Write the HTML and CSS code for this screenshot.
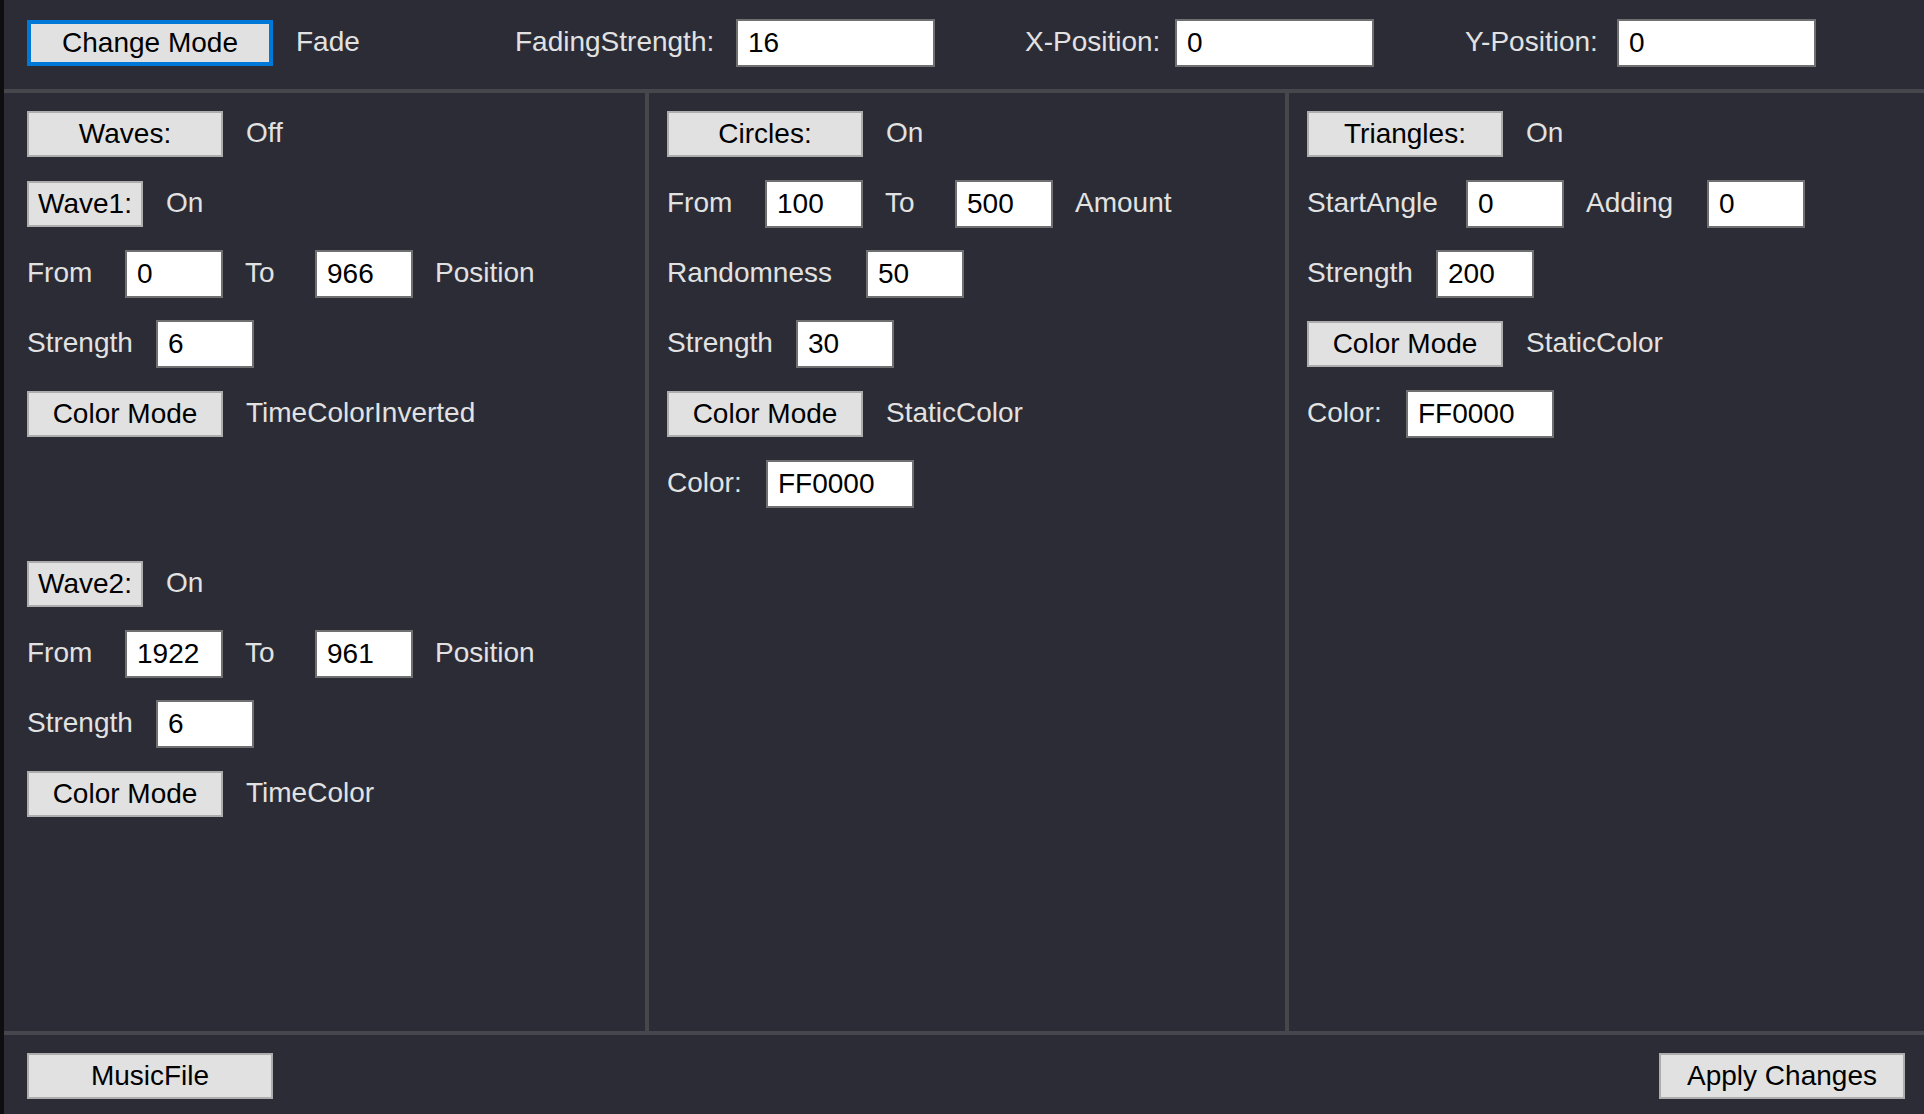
FILE: index.html
```html
<!DOCTYPE html>
<html lang="en">
<head>
<meta charset="utf-8">
<title>Visualizer Settings</title>
<link rel="stylesheet" href="styles.css">
</head>
<body>
<div class="app">
  <header class="topbar">
    <button class="btn btn-wide btn-focus">Change Mode</button>
    <span class="txt mode-val">Fade</span>
    <label class="txt lbl-fading">FadingStrength:</label>
    <input class="field field-hdr" value="16">
    <label class="txt lbl-xpos">X-Position:</label>
    <input class="field field-hdr" value="0">
    <label class="txt lbl-ypos">Y-Position:</label>
    <input class="field field-hdr" value="0">
  </header>

  <main class="panels">
    <section class="panel panel-first">
      <div class="row">
        <button class="btn btn-mid">Waves:</button>
        <span class="txt state">Off</span>
      </div>
      <div class="row">
        <button class="btn btn-small">Wave1:</button>
        <span class="txt state">On</span>
      </div>
      <div class="row">
        <span class="txt w-from">From</span>
        <input class="field field-sm" value="0">
        <span class="txt w-to">To</span>
        <input class="field field-sm" value="966">
        <span class="txt">Position</span>
      </div>
      <div class="row">
        <span class="txt w-strength">Strength</span>
        <input class="field field-sm" value="6">
      </div>
      <div class="row">
        <button class="btn btn-mid">Color Mode</button>
        <span class="txt state">TimeColorInverted</span>
      </div>

      <div class="row group-gap">
        <button class="btn btn-small">Wave2:</button>
        <span class="txt state">On</span>
      </div>
      <div class="row">
        <span class="txt w-from">From</span>
        <input class="field field-sm" value="1922">
        <span class="txt w-to">To</span>
        <input class="field field-sm" value="961">
        <span class="txt">Position</span>
      </div>
      <div class="row">
        <span class="txt w-strength">Strength</span>
        <input class="field field-sm" value="6">
      </div>
      <div class="row">
        <button class="btn btn-mid">Color Mode</button>
        <span class="txt state">TimeColor</span>
      </div>
    </section>

    <section class="panel">
      <div class="row">
        <button class="btn btn-mid">Circles:</button>
        <span class="txt state">On</span>
      </div>
      <div class="row">
        <span class="txt w-from">From</span>
        <input class="field field-sm" value="100">
        <span class="txt w-to">To</span>
        <input class="field field-sm" value="500">
        <span class="txt">Amount</span>
      </div>
      <div class="row">
        <span class="txt w-random">Randomness</span>
        <input class="field field-sm" value="50">
      </div>
      <div class="row">
        <span class="txt w-strength">Strength</span>
        <input class="field field-sm" value="30">
      </div>
      <div class="row">
        <button class="btn btn-mid">Color Mode</button>
        <span class="txt state">StaticColor</span>
      </div>
      <div class="row">
        <span class="txt w-color">Color:</span>
        <input class="field field-color" value="FF0000">
      </div>
    </section>

    <section class="panel">
      <div class="row">
        <button class="btn btn-mid">Triangles:</button>
        <span class="txt state">On</span>
      </div>
      <div class="row">
        <span class="txt w-start">StartAngle</span>
        <input class="field field-sm" value="0">
        <span class="txt w-adding">Adding</span>
        <input class="field field-sm" value="0">
      </div>
      <div class="row">
        <span class="txt w-strength">Strength</span>
        <input class="field field-sm" value="200">
      </div>
      <div class="row">
        <button class="btn btn-mid">Color Mode</button>
        <span class="txt state">StaticColor</span>
      </div>
      <div class="row">
        <span class="txt w-color">Color:</span>
        <input class="field field-color" value="FF0000">
      </div>
    </section>
  </main>

  <footer class="bottombar">
    <button class="btn btn-wide">MusicFile</button>
    <button class="btn btn-wide">Apply Changes</button>
  </footer>
</div>
</body>
</html>
```

FILE: styles.css
```css
* {
  box-sizing: border-box;
}

html, body {
  margin: 0;
  padding: 0;
  height: 100%;
}

body {
  background: #2b2c35;
  border-left: 4px solid #0e0e10;
  font-family: "Liberation Sans", Arial, sans-serif;
  font-size: 28px;
  color: #e2e2e2;
  overflow: hidden;
}

.app {
  display: flex;
  flex-direction: column;
  height: 100vh;
}

.txt {
  color: #e2e2e2;
  white-space: nowrap;
  line-height: 1;
  padding-bottom: 2px;
}

/* ---------- buttons ---------- */
.btn {
  font-family: "Liberation Sans", Arial, sans-serif;
  font-size: 28px;
  color: #000;
  background: #e1e1e1;
  border: 2px solid #adadad;
  height: 46px;
  padding: 0;
  margin: 0;
  line-height: 1;
  text-align: center;
  flex: none;
}

.btn-wide { width: 246px; }
.btn-mid { width: 196px; }
.btn-small { width: 116px; }

.btn-focus {
  border: 4px solid #0078d7;
}

/* ---------- inputs ---------- */
.field {
  font-family: "Liberation Sans", Arial, sans-serif;
  font-size: 28px;
  color: #000;
  background: #fff;
  border: 2px solid #707070;
  height: 48px;
  padding: 0 10px;
  margin: 0;
  flex: none;
  outline: none;
}

.field-hdr { width: 199px; }
.field-sm { width: 98px; }
.field-color { width: 148px; }

/* ---------- top bar ---------- */
.topbar {
  display: flex;
  align-items: center;
  height: 93px;
  padding: 0 0 4px 23px;
  border-bottom: 4px solid #46474c;
  flex: none;
}

.mode-val {
  width: 219px;
  margin-left: 23px;
}

.lbl-fading { width: 221px; }
.lbl-xpos { width: 150px; margin-left: 90px; }
.lbl-ypos { width: 152px; margin-left: 91px; }

/* ---------- panels ---------- */
.panels {
  flex: 1;
  display: grid;
  grid-template-columns: 641px 640px 1fr;
  min-height: 0;
}

.panel {
  display: flex;
  flex-direction: column;
  gap: 22px;
  padding: 17px 0 0 18px;
  border-left: 4px solid #46474c;
}

.panel-first {
  border-left: none;
  padding-left: 23px;
}

.row {
  display: flex;
  align-items: center;
  gap: 22px;
  height: 48px;
  flex: none;
}

.group-gap {
  margin-top: 100px;
}

.state { margin-left: 1px; }

.w-from { width: 76px; }
.w-to { width: 48px; }
.w-strength { width: 107px; }
.w-random { width: 177px; }
.w-color { width: 77px; }
.w-start { width: 137px; }
.w-adding { width: 99px; }

/* ---------- bottom bar ---------- */
.bottombar {
  display: flex;
  align-items: center;
  justify-content: space-between;
  height: 83px;
  padding: 3px 19px 0 23px;
  border-top: 4px solid #46474c;
  flex: none;
}
```
